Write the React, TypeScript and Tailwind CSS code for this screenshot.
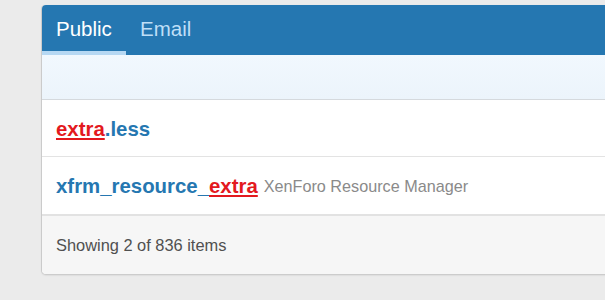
import React from "react";

export default function App() {
  return (
    <div className="w-[605px] h-[300px] overflow-hidden bg-[#ebebeb] pt-[5px] pl-[42px] font-['Liberation_Sans',Arial,sans-serif]">
      <div className="w-[620px] rounded-[4px] bg-white shadow-[0_1px_2px_rgba(0,0,0,0.18),-1px_0_0_#d6d6d6] overflow-hidden">
        <div className="flex h-[50px] bg-[#2577b1]">
          <div className="flex w-[84px] flex-col justify-between">
            <div className="pl-[14px] pt-[12px] text-[20.5px] leading-[24px] text-white">Public</div>
            <div className="h-[4px] bg-[#b6d8f3]" />
          </div>
          <div className="px-[14px] pt-[12px] text-[20.5px] leading-[24px] text-[#bfdff7]">Email</div>
        </div>
        <div className="h-[45px] bg-gradient-to-b from-[#f1f8fe] to-[#ecf4fb] border-b border-[#d5d9dd]" />
        <div className="flex h-[57px] items-center border-b border-[#e3e3e3] px-[14px] pt-[2px] text-[20.4px] font-bold text-[#2577b1]">
          <span className="text-[#e3191e] underline decoration-[2px] underline-offset-[2px]">extra</span>
          <span>.less</span>
        </div>
        <div className="flex h-[57px] items-center px-[14px] pt-[2px]">
          <span className="text-[20.4px] font-bold text-[#2577b1]">
            xfrm_resource_
            <span className="text-[#e3191e] underline decoration-[2px] underline-offset-[2px]">extra</span>
          </span>
          <span className="ml-[6px] text-[16.2px] text-[#8a8a8a]">XenForo Resource Manager</span>
        </div>
        <div className="flex h-[60px] items-center border-t-2 border-[#e2e2e2] bg-[#f6f6f6] px-[14px] pt-[1px] text-[16.4px] text-[#505050]">
          Showing 2 of 836 items
        </div>
      </div>
    </div>
  );
}
